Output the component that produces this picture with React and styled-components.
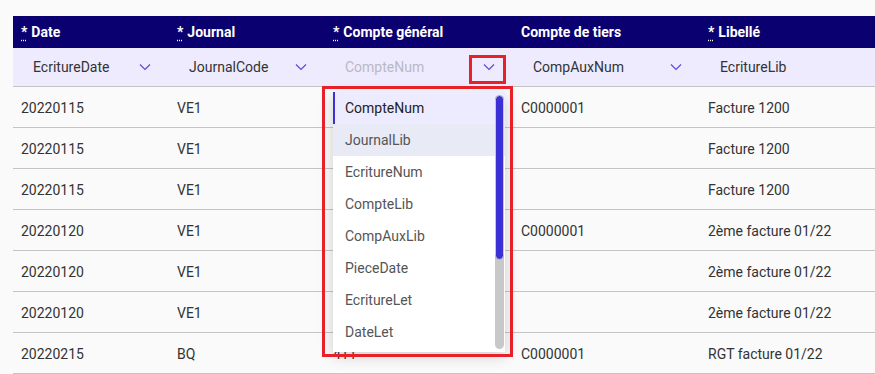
import React from "react";
import styled, { createGlobalStyle } from "styled-components";

const GlobalStyle = createGlobalStyle`
  html, body {
    margin: 0;
    padding: 0;
    background: #fafafa;
    font-family: Roboto, "Noto Sans", Arial, sans-serif;
    overflow: hidden;
  }
`;

const columns = [
  { key: "date", label: "Date", required: true, field: "EcritureDate" },
  { key: "journal", label: "Journal", required: true, field: "JournalCode" },
  { key: "compte", label: "Compte général", required: true, field: "CompteNum", open: true },
  { key: "tiers", label: "Compte de tiers", required: false, field: "CompAuxNum" },
  { key: "lib", label: "Libellé", required: true, field: "EcritureLib" },
];

// the Compte général column sits under the open menu, only the last row peeks out
const rows = [
  ["20220115", "VE1", "", "C0000001", "Facture 1200"],
  ["20220115", "VE1", "", "", "Facture 1200"],
  ["20220115", "VE1", "", "", "Facture 1200"],
  ["20220120", "VE1", "", "C0000001", "2ème facture 01/22"],
  ["20220120", "VE1", "", "", "2ème facture 01/22"],
  ["20220120", "VE1", "", "", "2ème facture 01/22"],
  ["20220215", "BQ", "411", "C0000001", "RGT facture 01/22"],
];

const options = [
  "CompteNum",
  "JournalLib",
  "EcritureNum",
  "CompteLib",
  "CompAuxLib",
  "PieceDate",
  "EcritureLet",
  "DateLet",
];

const Page = styled.div`
  padding: 16px 0 0 13px;
  width: 862px;
  height: 358px;
  overflow: hidden;
`;

const Table = styled.div`
  position: relative;
  width: 100%;
`;

const Grid = styled.div`
  display: grid;
  grid-template-columns: 156px 156px 188px 187px 1fr;
`;

const HeaderRow = styled(Grid)`
  background: #0b0070;
  height: 32px;
  align-items: center;
`;

const HeadCell = styled.div`
  padding: 0 8px;
  color: #fff;
  font-size: 14px;
  font-weight: 700;
  white-space: nowrap;
`;

const Required = styled.abbr`
  text-decoration: underline dotted;
  text-underline-offset: 3px;
  margin-right: 4px;
  cursor: help;
`;

const FilterRow = styled(Grid)`
  background: #eeebff;
  height: 38px;
  align-items: center;
  border-bottom: 1px solid #c4c4c4;
`;

const FilterCell = styled.div`
  position: relative;
  padding: 0 8px;
`;

const SelectBox = styled.div`
  display: flex;
  align-items: center;
  justify-content: space-between;
  height: 30px;
  padding: 0 10px 0 12px;
  font-size: 14px;
  color: ${(p) => (p.$open ? "#b9b9c3" : "#333")};
`;

const Chevron = styled.svg`
  width: 12px;
  height: 8px;
  flex: none;
`;

const BodyRow = styled(Grid)`
  height: 40px;
  align-items: center;
  border-bottom: 1px solid #c4c4c4;
`;

const Cell = styled.div`
  padding: 1px 8px 0;
  font-size: 14px;
  color: #333;
  white-space: nowrap;
`;

const Dropdown = styled.div`
  position: absolute;
  left: 320px;
  top: 76px;
  width: 172px;
  height: 260px;
  background: #fff;
  box-shadow: 0 4px 14px rgba(0, 0, 0, 0.18);
  overflow: hidden;
  z-index: 5;
`;

const Option = styled.div`
  height: 32px;
  display: flex;
  align-items: center;
  padding-left: ${(p) => (p.$selected ? "10px" : "12px")};
  font-size: 14px;
  color: ${(p) => (p.$selected ? "#222" : "#555")};
  background: ${(p) => (p.$selected ? "#ecebff" : p.$hover ? "#e8eaf6" : "#fff")};
  border-left: ${(p) => (p.$selected ? "2px solid #3b2fd6" : "none")};
`;

const ScrollTrack = styled.div`
  position: absolute;
  right: 1px;
  top: 3px;
  width: 9px;
  height: 254px;
  border-radius: 5px;
  background: #c8c8c8;
`;

const ScrollThumb = styled.div`
  width: 9px;
  height: 165px;
  border-radius: 5px;
  background: #3b2fd6;
  border: 1px solid #c8c8c8;
  box-sizing: border-box;
`;

const Highlight = styled.div`
  position: absolute;
  border: 3px solid #e8202a;
  box-sizing: border-box;
  z-index: 6;
  pointer-events: none;
`;

function ChevronIcon() {
  return (
    <Chevron viewBox="0 0 12 8">
      <polyline points="1,1.5 6,6.5 11,1.5" fill="none" stroke="#5b4bd6" strokeWidth="1.2" />
    </Chevron>
  );
}

export default function App() {
  return (
    <>
      <GlobalStyle />
      <Page>
        <Table>
          <HeaderRow>
            {columns.map((c) => (
              <HeadCell key={c.key}>
                {c.required && <Required title="obligatoire">*</Required>}
                {c.label}
              </HeadCell>
            ))}
          </HeaderRow>
          <FilterRow>
            {columns.map((c) => (
              <FilterCell key={c.key}>
                <SelectBox $open={c.open}>
                  <span>{c.field}</span>
                  {c.key !== "lib" && <ChevronIcon />}
                </SelectBox>
              </FilterCell>
            ))}
          </FilterRow>
          {rows.map((r, i) => (
            <BodyRow key={i}>
              {r.map((v, j) => (
                <Cell key={j}>{v}</Cell>
              ))}
            </BodyRow>
          ))}

          <Dropdown>
            {options.map((o, i) => (
              <Option key={o} $selected={i === 0} $hover={i === 1}>
                {o}
              </Option>
            ))}
            <ScrollTrack>
              <ScrollThumb />
            </ScrollTrack>
          </Dropdown>

          <Highlight style={{ left: 456, top: 39, width: 37, height: 29 }} />
          <Highlight style={{ left: 309, top: 70, width: 191, height: 271 }} />
        </Table>
      </Page>
    </>
  );
}
